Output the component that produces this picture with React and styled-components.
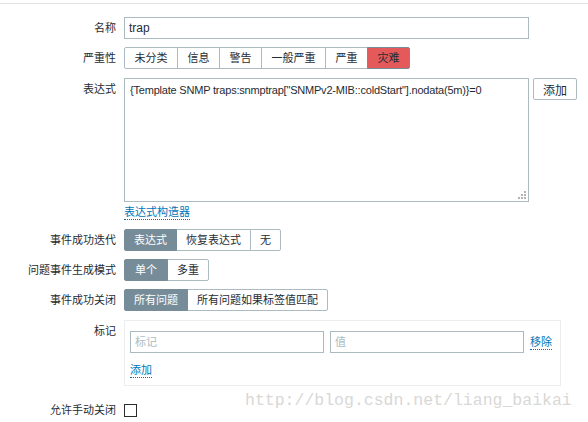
import styled, { createGlobalStyle } from 'styled-components';

const GlobalStyle = createGlobalStyle`
	body {
		margin: 0;
		background: #ffffff;
		font-family: 'Liberation Sans', 'Noto Sans CJK SC', sans-serif;
		font-size: 11px;
		color: #1f2c33;
	}
`;

const Page = styled.div`
	position: relative;
	box-sizing: border-box;
	width: 588px;
	height: 422px;
	padding-top: 3px;
	overflow: hidden;
`;

const Divider = styled.div`
	border-top: 1px solid #e3e3e3;
`;

const Form = styled.div`
	display: flex;
	flex-direction: column;
	gap: 8px;
	padding-top: 13px;
`;

const Row = styled.div`
	display: grid;
	grid-template-columns: 116px auto;
	column-gap: 8px;
	align-items: start;
	margin-top: ${(p) => p.$mt || 0}px;
`;

const Label = styled.div`
	text-align: right;
	line-height: 22px;
	white-space: nowrap;
`;

const Field = styled.div`
	display: flex;
	align-items: center;
	height: 22px;
`;

const TextInput = styled.input`
	box-sizing: border-box;
	width: ${(p) => p.$w}px;
	height: 22px;
	margin: 0;
	padding: 0 4px;
	border: 1px solid #acbbc2;
	background: #fff;
	font: inherit;
	font-size: 12px;
	color: #1f2c33;
	outline: none;

	&::placeholder {
		color: #acbbc2;
		font-size: 11px;
	}
`;

const Segmented = styled.div`
	display: inline-flex;
`;

const Segment = styled.div`
	box-sizing: border-box;
	height: 22px;
	line-height: 20px;
	padding: 0 ${(p) => p.$pad || 9}px;
	margin-left: -1px;
	border: 1px solid ${(p) => (p.$active || p.$danger ? '#768d99' : '#acbbc2')};
	background: ${(p) => (p.$danger ? '#e45959' : p.$active ? '#768d99' : '#fff')};
	color: ${(p) => (p.$active ? '#fff' : '#1f2c33')};
	white-space: nowrap;
	position: relative;
	z-index: ${(p) => (p.$active || p.$danger ? 1 : 0)};

	&:first-child {
		margin-left: 0;
		border-radius: 2px 0 0 2px;
	}
	&:last-child {
		border-radius: 0 2px 2px 0;
	}
`;

const ExprGrid = styled.div`
	display: grid;
	grid-template-columns: 405px 44px;
	column-gap: 4px;
	align-items: start;
`;

const TextAreaWrap = styled.div`
	position: relative;
	width: 405px;
	height: 124px;
`;

const TextArea = styled.textarea`
	box-sizing: border-box;
	display: block;
	width: 405px;
	height: 124px;
	margin: 0;
	padding: 4px 5px;
	border: 1px solid #acbbc2;
	font: inherit;
	font-size: 11px;
	letter-spacing: -0.2px;
	line-height: 14px;
	color: #1f2c33;
	resize: none;
	outline: none;
`;

const Grip = styled.svg`
	position: absolute;
	right: 3px;
	bottom: 3px;
	width: 8px;
	height: 8px;
	fill: #b4b4b4;
`;

const Button = styled.button`
	box-sizing: border-box;
	width: 44px;
	height: 22px;
	margin: 0;
	padding: 0;
	border: 1px solid #acbbc2;
	border-radius: 2px;
	background: #fff;
	font: inherit;
	font-size: 12px;
	color: #1f2c33;
`;

const Link = styled.span`
	display: inline-block;
	line-height: 14px;
	white-space: nowrap;
	color: #0275b8;
	border-bottom: 1px dotted #0275b8;
	margin-top: ${(p) => p.$mt || 0}px;
	margin-left: ${(p) => p.$ml || 0}px;
`;

const Stack = styled.div`
	display: flex;
	flex-direction: column;
	align-items: flex-start;
`;

const TagBox = styled.div`
	box-sizing: border-box;
	width: 437px;
	padding: 10px 9px 7px 5px;
	border: 1px solid #ebeef0;
	display: flex;
	flex-direction: column;
	align-items: flex-start;
`;

const TagLine = styled.div`
	display: flex;
	align-items: center;
	gap: 6px;
`;

const Checkbox = styled.span`
	box-sizing: border-box;
	display: block;
	width: 13px;
	height: 13px;
	border: 1px solid #2b2b2b;
	background: #fff;
`;

const Watermark = styled.div`
	position: absolute;
	left: 245px;
	top: 392px;
	font-family: 'Liberation Mono', monospace;
	font-size: 16.5px;
	line-height: 18px;
	color: #d8d8d6;
	white-space: nowrap;
	pointer-events: none;
`;

const severities = ['未分类', '信息', '警告', '一般严重', '严重', '灾难'];

export default function App() {
	return (
		<Page>
			<GlobalStyle />
			<Divider />
			<Form>
				<Row>
					<Label>名称</Label>
					<Field>
						<TextInput $w={405} defaultValue="trap" />
					</Field>
				</Row>
				<Row>
					<Label>严重性</Label>
					<Field>
						<Segmented>
							{severities.map((s) => (
								<Segment key={s} $pad={9.5} $danger={s === '灾难'}>
									{s}
								</Segment>
							))}
						</Segmented>
					</Field>
				</Row>
				<Row $mt={1}>
					<Label>表达式</Label>
					<Stack>
						<ExprGrid>
							<TextAreaWrap>
								<TextArea defaultValue={'{Template SNMP traps:snmptrap["SNMPv2-MIB::coldStart"].nodata(5m)}=0'} />
								<Grip viewBox="0 0 8 8">
									<rect x="6" y="0" width="2" height="2" />
									<rect x="3" y="3" width="2" height="2" />
									<rect x="6" y="3" width="2" height="2" />
									<rect x="0" y="6" width="2" height="2" />
									<rect x="3" y="6" width="2" height="2" />
									<rect x="6" y="6" width="2" height="2" />
								</Grip>
							</TextAreaWrap>
							<Button>添加</Button>
						</ExprGrid>
						<Link $mt={3}>表达式构造器</Link>
					</Stack>
				</Row>
				<Row $mt={1}>
					<Label>事件成功迭代</Label>
					<Field>
						<Segmented>
							<Segment $active>表达式</Segment>
							<Segment>恢复表达式</Segment>
							<Segment>无</Segment>
						</Segmented>
					</Field>
				</Row>
				<Row>
					<Label>问题事件生成模式</Label>
					<Field>
						<Segmented>
							<Segment $active $pad={10}>单个</Segment>
							<Segment>多重</Segment>
						</Segmented>
					</Field>
				</Row>
				<Row>
					<Label>事件成功关闭</Label>
					<Field>
						<Segmented>
							<Segment $active>所有问题</Segment>
							<Segment>所有问题如果标签值匹配</Segment>
						</Segmented>
					</Field>
				</Row>
				<Row $mt={1}>
					<Label>标记</Label>
					<TagBox>
						<TagLine>
							<TextInput $w={194} placeholder="标记" />
							<TextInput $w={194} placeholder="值" />
							<Link>移除</Link>
						</TagLine>
						<Link $mt={10}>添加</Link>
					</TagBox>
				</Row>
				<Row $mt={5}>
					<Label>允许手动关闭</Label>
					<Field>
						<Checkbox />
					</Field>
				</Row>
			</Form>
			<Watermark>http://blog.csdn.net/liang_baikai</Watermark>
		</Page>
	);
}
